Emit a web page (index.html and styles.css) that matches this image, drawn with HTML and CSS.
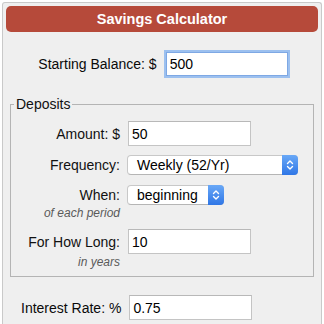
FILE: index.html
```html
<!DOCTYPE html>
<html>
<head>
<meta charset="utf-8">
<link rel="stylesheet" href="styles.css">
</head>
<body>
<div class="panel">
  <div class="header">Savings Calculator</div>
  <div class="balance-row">
    <label class="lbl">Starting Balance: $</label>
    <input class="field focused" type="text" value="500">
  </div>
  <fieldset class="deposits">
    <legend class="legend">Deposits</legend>
    <div class="row row-amount">
      <label class="col-label">Amount: $</label>
      <input class="field" type="text" value="50">
    </div>
    <div class="row row-freq">
      <label class="col-label">Frequency:</label>
      <div class="select select-wide">
        <span class="select-text">Weekly (52/Yr)</span>
        <span class="arrow"><svg width="8" height="12" viewBox="0 0 8 12"><path d="M1.5 4.5 L4 2 L6.5 4.5 M1.5 7.5 L4 10 L6.5 7.5" fill="none" stroke="#fff" stroke-width="1.4" stroke-linecap="round" stroke-linejoin="round"/></svg></span>
      </div>
    </div>
    <div class="row row-when">
      <label class="col-label">When:</label>
      <div class="select select-narrow">
        <span class="select-text">beginning</span>
        <span class="arrow"><svg width="8" height="12" viewBox="0 0 8 12"><path d="M1.5 4.5 L4 2 L6.5 4.5 M1.5 7.5 L4 10 L6.5 7.5" fill="none" stroke="#fff" stroke-width="1.4" stroke-linecap="round" stroke-linejoin="round"/></svg></span>
      </div>
    </div>
    <div class="note-row"><span class="note">of each period</span></div>
    <div class="row row-long">
      <label class="col-label">For How Long:</label>
      <input class="field" type="text" value="10">
    </div>
    <div class="note-row note-last"><span class="note">in years</span></div>
  </fieldset>
  <div class="rate-row">
    <label class="lbl">Interest Rate: %</label>
    <input class="field" type="text" value="0.75">
  </div>
</div>
</body>
</html>
```
FILE: styles.css
```css
html, body {
  margin: 0;
  padding: 0;
  background: #ffffff;
  overflow: hidden;
}
body {
  font-family: "Liberation Sans", Arial, Helvetica, sans-serif;
  font-size: 14px;
  color: #111;
}
.panel {
  box-sizing: border-box;
  margin: 2px 2px 0 2px;
  border: 1px solid #c9c9c9;
  border-bottom: 0;
  border-radius: 3px 3px 0 0;
  background: #efefef;
  padding: 3px;
  height: calc(100vh - 2px);
  overflow: hidden;
}
.header {
  height: 26px;
  line-height: 26px;
  background: #b64a3a;
  border-radius: 5px;
  color: #fff;
  font-weight: bold;
  font-size: 14.5px;
  text-align: center;
}
.balance-row {
  display: flex;
  justify-content: center;
  align-items: center;
  gap: 9px;
  margin-top: 20px;
  height: 24px;
  padding-left: 2px;
}
.lbl {
  color: #0a0a0a;
}
.field {
  box-sizing: border-box;
  width: 123px;
  height: 25px;
  border: 1px solid #c4c4c4;
  border-top-color: #b8b8b8;
  background: #fff;
  font-family: "Liberation Sans", Arial, sans-serif;
  font-size: 14px;
  color: #000;
  padding: 0 3px;
  margin: 0;
  outline: none;
}
.focused {
  width: 122px;
  height: 24px;
  border: 1px solid #7ea8e4;
  box-shadow: 0 0 0 2px #9cc0ef;
}
.deposits {
  margin: 20px 4px 0 4px;
  padding: 0 0 8px 0;
  border: 1px solid #b4b4b4;
  min-width: 0;
}
.legend {
  margin-left: 3px;
  padding: 0 2px;
  line-height: 16px;
  font-size: 14px;
}
.row {
  display: flex;
  align-items: center;
}
.col-label {
  width: 109px;
  text-align: right;
  margin-right: 8px;
  flex: none;
}
.row-amount { margin-top: 9px; }
.row-freq { margin-top: 9px; }
.row-when { margin-top: 10px; }
.row-long { margin-top: 10px; }
.note-row {
  width: 109px;
  text-align: right;
  line-height: 14px;
  height: 14px;
}
.note {
  font-style: italic;
  font-size: 12px;
  color: #5a5a5a;
}
.select {
  position: relative;
  box-sizing: border-box;
  height: 20px;
  margin-left: -1px;
  background: #fff;
  border: 1px solid #c8c8c8;
  border-bottom-color: #b5b5b5;
  border-radius: 4px;
  display: flex;
  align-items: center;
  padding-left: 9px;
}
.select-wide { width: 171px; }
.select-narrow { width: 97px; }
.select-text {
  font-size: 14px;
  line-height: 18px;
  color: #000;
}
.arrow {
  position: absolute;
  top: -1px;
  right: -1px;
  width: 16px;
  height: 20px;
  border-radius: 0 4px 4px 0;
  background: linear-gradient(#69a8f7, #2f76e6);
  display: flex;
  align-items: center;
  justify-content: center;
}
.arrow svg { display: block; }
.rate-row {
  display: flex;
  align-items: center;
  gap: 8px;
  margin-top: 18px;
  padding-left: 15px;
}
```
